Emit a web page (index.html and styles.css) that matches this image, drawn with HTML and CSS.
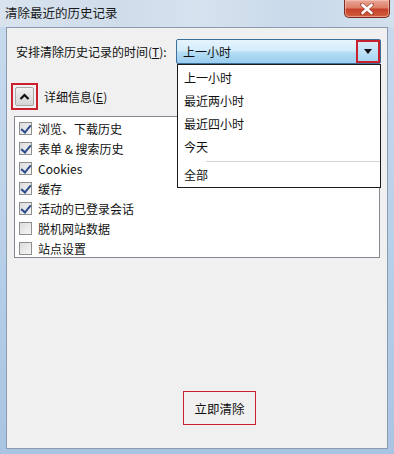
FILE: index.html
```html
<!DOCTYPE html>
<html lang="zh-CN">
<head>
<meta charset="utf-8">
<title>清除最近的历史记录</title>
<link rel="stylesheet" href="styles.css">
</head>
<body>
<div class="window">
  <div class="titlebar">
    <span class="title">清除最近的历史记录</span>
    <div class="close">
      <svg width="16" height="12" viewBox="0 0 16 12"><path d="M3 1.5 L13 10.5 M13 1.5 L3 10.5" stroke="#7a2a20" stroke-width="4" stroke-linecap="round" opacity="0.5"/><path d="M3.5 2 L12.5 10 M12.5 2 L3.5 10" stroke="#fff" stroke-width="2.6" stroke-linecap="round"/></svg>
    </div>
  </div>
  <div class="client">
    <div class="row-time">
      <span class="label">安排清除历史记录的时间(<u>T</u>):</span>
      <div class="combo">
        <span class="combo-text">上一小时</span>
        <div class="combo-btn">
          <svg width="8" height="5" viewBox="0 0 8 5"><path d="M0 0 H8 L4 5 Z" fill="#111"/></svg>
        </div>
      </div>
    </div>
    <div class="row-details">
      <div class="toggle-ring">
        <div class="toggle">
          <svg width="11" height="7" viewBox="0 0 11 7"><path d="M1.5 6 L5.5 2 L9.5 6" fill="none" stroke="#111" stroke-width="2.2"/></svg>
        </div>
      </div>
      <span class="details-label">详细信息(<u>E</u>)</span>
    </div>
    <div class="listbox">
      <div class="item"><span class="cb on"></span><span>浏览、下载历史</span></div>
      <div class="item"><span class="cb on"></span><span>表单 &amp; 搜索历史</span></div>
      <div class="item"><span class="cb on"></span><span>Cookies</span></div>
      <div class="item"><span class="cb on"></span><span>缓存</span></div>
      <div class="item"><span class="cb on"></span><span>活动的已登录会话</span></div>
      <div class="item"><span class="cb"></span><span>脱机网站数据</span></div>
      <div class="item"><span class="cb"></span><span>站点设置</span></div>
    </div>
    <div class="actions">
      <div class="btn">立即清除</div>
    </div>
    <div class="dropdown">
      <div class="opt">上一小时</div>
      <div class="opt">最近两小时</div>
      <div class="opt">最近四小时</div>
      <div class="opt">今天</div>
      <div class="sep"></div>
      <div class="opt last">全部</div>
    </div>
  </div>
</div>
</body>
</html>
```
FILE: styles.css
```css
* { box-sizing: border-box; }
html, body { margin: 0; padding: 0; }
body {
  width: 394px;
  height: 454px;
  overflow: hidden;
  font-family: "Noto Sans CJK SC", "Noto Sans", sans-serif;
  font-size: 12px;
  color: #111;
}
.window {
  width: 394px;
  height: 454px;
  display: flex;
  flex-direction: column;
  background: linear-gradient(180deg, #c9dbee 0%, #bcd3ea 40%, #a9c4e2 100%);
}
.titlebar {
  height: 27px;
  flex: none;
  display: flex;
  align-items: flex-start;
  justify-content: space-between;
  background: linear-gradient(90deg, #d8e3ee 0%, #cfdcea 30%, #d6e2ee 50%, #c9d9ea 75%, #d3e0ed 100%);
}
.title {
  margin: 3px 0 0 5px;
  font-size: 12.5px;
  line-height: 20px;
  color: #1a1a1a;
  white-space: nowrap;
}
.close {
  width: 46px;
  height: 18px;
  margin-right: 4px;
  border: 1px solid #7d2b20;
  border-top: none;
  border-radius: 0 0 5px 5px;
  background: linear-gradient(180deg, #e9a898 0%, #dd7e68 45%, #c6412a 55%, #d0603f 100%);
  box-shadow: inset 0 0 0 1px rgba(255,210,200,0.5);
  display: flex;
  align-items: center;
  justify-content: center;
}
.client {
  position: relative;
  flex: 1;
  margin: 0 6px 5px 6px;
  background: #f0f0f0;
  border: 1px solid #8a9bb0;
  padding: 11px 6px 0 7px;
  display: flex;
  flex-direction: column;
}
.row-time {
  height: 25px;
  display: flex;
  align-items: center;
}
.label { margin-left: 2px; white-space: nowrap; }
.combo {
  margin-left: auto;
  width: 205px;
  height: 25px;
  border: 1px solid #3c6f9a;
  border-radius: 2px;
  background: linear-gradient(180deg, #e6f4fd 0%, #d4ecfb 45%, #b4dcf5 55%, #9ccdef 100%);
  display: flex;
  align-items: center;
  justify-content: space-between;
  padding-left: 6px;
}
.combo-btn {
  width: 24px;
  height: 23px;
  border: 2px solid #c8202c;
  display: flex;
  align-items: center;
  justify-content: center;
  background: linear-gradient(180deg, #d6ecfb 0%, #a8d6f3 100%);
}
.row-details {
  margin-top: 19px;
  margin-left: -3px;
  display: flex;
  align-items: center;
}
.toggle-ring {
  width: 27px;
  height: 27px;
  border: 2px solid #c8202c;
  padding: 2px;
}
.toggle {
  width: 19px;
  height: 19px;
  border: 1px solid #a8a8a8;
  border-radius: 2px;
  background: linear-gradient(180deg, #f2f2f2 0%, #e2e2e2 50%, #d4d4d4 100%);
  display: flex;
  align-items: center;
  justify-content: center;
}
.details-label { margin-left: 6px; white-space: nowrap; }
.listbox {
  margin-top: 6px;
  width: 366px;
  height: 142px;
  background: #fff;
  border: 1px solid #828790;
  padding: 1px 0 0 4px;
}
.item {
  height: 20px;
  display: flex;
  align-items: center;
  white-space: nowrap;
}
.cb {
  width: 13px;
  height: 13px;
  border: 1px solid #8e8f8f;
  background: linear-gradient(135deg, #dcdcdc 0%, #f6f6f6 100%);
  margin-right: 6px;
  position: relative;
  flex: none;
}
.cb.on::after {
  content: "";
  position: absolute;
  left: 3px;
  top: 0px;
  width: 4px;
  height: 8px;
  border: solid #2c4c8c;
  border-width: 0 2px 2px 0;
  transform: rotate(40deg);
}
.actions {
  margin-top: 133px;
  display: flex;
  padding-left: 169px;
}
.btn {
  width: 73px;
  height: 34px;
  border: 1px solid #c8202c;
  display: flex;
  align-items: center;
  justify-content: center;
  font-size: 12.5px;
}
.dropdown {
  position: absolute;
  left: 170px;
  top: 36px;
  width: 204px;
  height: 124px;
  background: #fff;
  border: 1px solid #1a1a1a;
  padding-top: 1px;
}
.opt {
  height: 23px;
  line-height: 23px;
  padding-left: 6px;
  white-space: nowrap;
}
.sep {
  height: 1px;
  margin: 3px 0 1px 28px;
  background: #d4d4d4;
}
```
